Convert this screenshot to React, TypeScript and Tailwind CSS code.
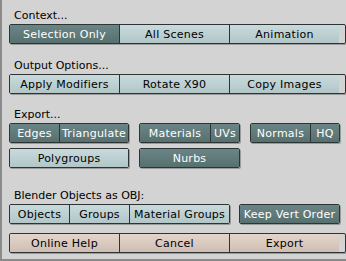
import React from 'react';

type Tone = 'on' | 'off' | 'tan';

interface Btn {
  label: string;
  w: number;
  tone: Tone;
}

const toneClass: Record<Tone, string> = {
  on: 'bg-linear-to-b from-[#6b8587] to-[#57706f] text-white',
  off: 'bg-linear-to-b from-[#c8dadc] to-[#b2c6c8] text-black',
  tan: 'bg-linear-to-b from-[#e3d4ca] to-[#d0beb3] text-black',
};

// A row of buttons glued together, Blender 2.4x style
const Group: React.FC<{ items: Btn[] }> = ({ items }) => (
  <div className="flex h-[20px] border border-[#2e3434] rounded-[2px] shadow-[1px_1px_0_#9a9a9a] overflow-hidden">
    {items.map((b, i) => (
      <div
        key={b.label}
        style={{ width: b.w - (i === 0 ? 1 : 0) - (i === items.length - 1 ? 1 : 0) }}
        className={`flex items-center justify-center shrink-0 ${toneClass[b.tone]} ${i > 0 ? 'border-l border-[#2e3434]' : ''}`}
      >
        <span className="leading-none tracking-[0.25px]">{b.label}</span>
      </div>
    ))}
  </div>
);

const Label: React.FC<{ text: string; h: number }> = ({ text, h }) => (
  <div style={{ height: h }} className="flex items-end pl-[5px] pb-[3px] text-black leading-none">
    {text}
  </div>
);

export default function App() {
  return (
    <div
      className="w-[346px] h-[261px] bg-[#d3d3d3] border-l-[2px] border-b-[2px] border-[#8a8a8a] pl-[7px] text-[11px] overflow-hidden"
      style={{ fontFamily: '"DejaVu Sans", Verdana, sans-serif' }}
    >
      <Label text="Context..." h={24} />
      <Group
        items={[
          { label: 'Selection Only', w: 110, tone: 'on' },
          { label: 'All Scenes', w: 110, tone: 'off' },
          { label: 'Animation', w: 111, tone: 'off' },
        ]}
      />

      <Label text="Output Options..." h={30} />
      <Group
        items={[
          { label: 'Apply Modifiers', w: 110, tone: 'off' },
          { label: 'Rotate X90', w: 110, tone: 'off' },
          { label: 'Copy Images', w: 111, tone: 'off' },
        ]}
      />

      <Label text="Export..." h={29} />
      <div className="flex gap-[10px]">
        <Group
          items={[
            { label: 'Edges', w: 50, tone: 'on' },
            { label: 'Triangulate', w: 70, tone: 'on' },
          ]}
        />
        <Group
          items={[
            { label: 'Materials', w: 71, tone: 'on' },
            { label: 'UVs', w: 30, tone: 'on' },
          ]}
        />
        <Group
          items={[
            { label: 'Normals', w: 60, tone: 'on' },
            { label: 'HQ', w: 30, tone: 'on' },
          ]}
        />
      </div>
      <div className="flex gap-[10px] mt-[5px]">
        <Group items={[{ label: 'Polygroups', w: 120, tone: 'off' }]} />
        <Group items={[{ label: 'Nurbs', w: 101, tone: 'on' }]} />
      </div>

      <Label text="Blender Objects as OBJ:" h={36} />
      <div className="flex gap-[9px]">
        <Group
          items={[
            { label: 'Objects', w: 60, tone: 'off' },
            { label: 'Groups', w: 60, tone: 'off' },
            { label: 'Material Groups', w: 101, tone: 'off' },
          ]}
        />
        <Group items={[{ label: 'Keep Vert Order', w: 101, tone: 'on' }]} />
      </div>

      <div className="mt-[9px]">
        <Group
          items={[
            { label: 'Online Help', w: 110, tone: 'tan' },
            { label: 'Cancel', w: 110, tone: 'tan' },
            { label: 'Export', w: 111, tone: 'tan' },
          ]}
        />
      </div>
    </div>
  );
}
